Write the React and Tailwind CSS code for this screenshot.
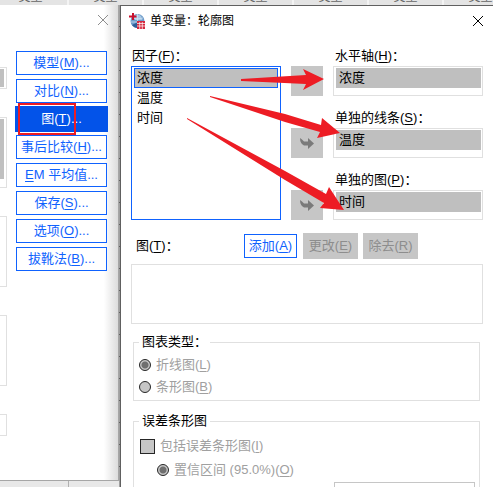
import { useState } from "react";

const sideButtons = [
  { text: "模型", hotkey: "M" },
  { text: "对比", hotkey: "N" },
  { text: "图", hotkey: "T" },
  { text: "事后比较", hotkey: "H" },
  { text: "EM 平均值" },
  { text: "保存", hotkey: "S" },
  { text: "选项", hotkey: "O" },
  { text: "拔靴法", hotkey: "B" },
];

const factors = ["浓度", "温度", "时间"];

const targets = [
  { id: "axis", label: "水平轴", hotkey: "H", value: "浓度" },
  { id: "lines", label: "单独的线条", hotkey: "S", value: "温度" },
  { id: "plots", label: "单独的图", hotkey: "P", value: "时间" },
];

const radioClass =
  "size-3 shrink-0 appearance-none rounded-full border border-[#262626] bg-[#c6c6c6] checked:bg-[radial-gradient(circle,#6f6f6f_0_3px,#c6c6c6_4px)]";

const Hotkey = ({ children }) => (
  <>
    (<u className="underline-offset-2">{children}</u>)
  </>
);

const CloseIcon = () => (
  <svg viewBox="0 0 10 10" className="size-[10px]" fill="none" stroke="currentColor">
    <path d="M0 0L10 10M10 0L0 10" />
  </svg>
);

const AppIcon = () => (
  <svg viewBox="0 0 16 16" className="size-4 shrink-0">
    <circle cx="8.5" cy="8" r="7" fill="#6d9bc9" />
    <path d="M3 12A7 7 0 0 0 9 15V9Z" fill="#2f5f98" />
    <path d="M5 3Q8.5 0.5 12 3L13.5 7H6Z" fill="#a9c8e4" />
    <path d="M2 9H14M8.5 1V15M3 5Q8 7 14 5" stroke="#d5e5f3" strokeWidth="0.7" fill="none" />
    <path d="M0 3.5H7.5M4 0V7" stroke="#c8102e" strokeWidth="2" />
    <rect x="8" y="8" width="8" height="8" fill="#d5283f" />
    <path d="M8 10.5H16M8 13H16M10.7 9V16M13.3 9V16" stroke="#fff" strokeWidth="0.7" />
  </svg>
);

const MoveIcon = () => (
  <svg viewBox="0 0 16 16" className="size-4" fill="#7a7a7a">
    <path d="M1 3L3 4.5L5 6.5H9V3L15 8.5L9 14V10.500H5Q1 8.500 1 3Z" />
  </svg>
);

const ParentDialog = () => (
  <aside className="flex h-[476px] w-[119px] shrink-0 flex-col border-r border-b border-[#a6a6a6] bg-linear-to-r from-white from-88% to-[#dcdcdc] text-[#0f62fe]">
    <div className="flex h-[30px] items-center justify-end pr-[10px] text-[#8d8d8d]">
      <button aria-label="关闭">
        <CloseIcon />
      </button>
    </div>
    <div className="flex pr-[10px]">
      {/* right edges of the option fields */}
      <div className="mt-8 flex w-[7px] shrink-0 flex-col gap-7">
        <div className="h-[22px] border border-l-0 border-[#e0e0e0] py-px pr-[2px]">
          <div className="h-full bg-[#c0c0c0]" />
        </div>
        <div className="h-[71px] border border-l-0 border-[#e0e0e0] pt-px pr-[2px] pb-2">
          <div className="h-full bg-[#c0c0c0]" />
        </div>
        <div className="h-[71px] border border-l-0 border-[#e0e0e0]" />
        <div className="h-[71px] border border-l-0 border-[#e0e0e0]" />
        <div className="h-[22px] border border-l-0 border-[#e0e0e0]" />
      </div>
      <nav className="mt-[15px] flex flex-1 flex-col gap-[2px] pl-2">
        {sideButtons.map((btn) =>
          btn.hotkey === "T" ? (
            <button key={btn.text} className="relative h-[26px] bg-[#0353e9] text-white">
              {btn.text}
              <Hotkey>{btn.hotkey}</Hotkey>...
              <span className="absolute -top-[3px] left-[3px] h-8 w-[58px] border-2 border-[#ed1c24]" />
            </button>
          ) : (
            <button
              key={btn.text}
              className="m-px h-6 border border-[#0f62fe] bg-white whitespace-nowrap"
            >
              {btn.hotkey ? (
                <>
                  {btn.text}
                  <Hotkey>{btn.hotkey}</Hotkey>...
                </>
              ) : (
                <>
                  <u className="underline-offset-2">E</u>M 平均值...
                </>
              )}
            </button>
          )
        )}
      </nav>
    </div>
  </aside>
);

export default function App() {
  const [factor, setFactor] = useState("浓度");

  return (
    <div className="flex h-screen flex-col overflow-hidden bg-[#e8e8e8] font-['Liberation_Sans','Noto_Sans_CJK_SC',sans-serif] text-[13px] leading-5 text-black">
      {/* data sheet header behind the dialogs */}
      <div className="-ml-[6px] flex h-[5px] shrink-0 items-end overflow-hidden bg-[#e4e4e4] text-[12px] leading-4 text-[#666]">
        {[0, 1, 2, 3, 4, 5, 6].map((n) => (
          <div key={n} className="w-[75px] shrink-0 border-r-2 border-[#f4f4f4] text-center">
            类型
          </div>
        ))}
      </div>

      <div className="flex min-h-0 flex-1">
        <div className="flex flex-col">
          <ParentDialog />
          <div className="h-2 w-[69px] border-r border-[#b0b0b0]" />
        </div>
        <div className="w-[2px] shrink-0 border-r border-[#606060] bg-[repeating-linear-gradient(#a0a0a0_0_21px,#606060_21px_22px)]" />

        <main className="relative min-w-0 flex-1 border-t border-[#606060] bg-white">
          <header className="flex h-[30px] items-center pr-[10px] pl-2 text-[12px]">
            <AppIcon />
            <h1 className="ml-[5px] flex-1">单变量：轮廓图</h1>
            <button aria-label="关闭">
              <CloseIcon />
            </button>
          </header>

          <div className="px-[10px] pt-[10px]">
            <div className="grid grid-cols-[1fr_32px_1fr] gap-x-[10px]">
              <div className="flex flex-col">
                <span id="factors" className="pl-px">
                  因子<Hotkey>F</Hotkey>：
                </span>
                <ul
                  role="listbox"
                  aria-labelledby="factors"
                  className="flex-1 border border-[#0f62fe] p-px"
                >
                  {factors.map((f) => (
                    <li
                      key={f}
                      role="option"
                      aria-selected={f === factor}
                      onClick={() => setFactor(f)}
                      className={
                        f === factor
                          ? "mx-px h-5 border border-[#0f62fe] bg-[#bfbfbf] px-[2px] leading-[18px]"
                          : "mx-px h-5 px-[3px]"
                      }
                    >
                      {f}
                    </li>
                  ))}
                </ul>
              </div>

              <div className="flex flex-col gap-8 pt-5">
                {targets.map((t) => (
                  <button
                    key={t.id}
                    disabled
                    aria-label={t.label}
                    className="flex h-[30px] items-center justify-center bg-[#c6c6c6]"
                  >
                    <MoveIcon />
                  </button>
                ))}
              </div>

              <div className="flex flex-col gap-3">
                {targets.map((t) => (
                  <div key={t.id}>
                    <label htmlFor={t.id} className="block pl-[2px]">
                      {t.label}
                      <Hotkey>{t.hotkey}</Hotkey>：
                    </label>
                    <div className="h-[30px] border border-[#e0e0e0] py-px pr-px pl-[2px]">
                      <input
                        id={t.id}
                        readOnly
                        value={t.value}
                        className="block h-5 w-full bg-[#bfbfbf] px-[3px] outline-none"
                      />
                    </div>
                  </div>
                ))}
              </div>
            </div>

            <div className="mt-[13px] flex items-center gap-[5px]">
              <span id="plot-list" className="w-[107px] pl-[5px]">
                图<Hotkey>T</Hotkey>：
              </span>
              <button className="m-px h-6 w-[53px] border border-[#0f62fe] text-[#0f62fe]">
                添加<Hotkey>A</Hotkey>
              </button>
              <button disabled className="h-[26px] w-[55px] bg-[#c6c6c6] text-[#8d8d8d]">
                更改<Hotkey>E</Hotkey>
              </button>
              <button disabled className="h-[26px] w-[55px] bg-[#c6c6c6] text-[#8d8d8d]">
                除去<Hotkey>R</Hotkey>
              </button>
            </div>
            <ul
              role="listbox"
              aria-labelledby="plot-list"
              className="mt-[5px] h-[60px] border border-[#e0e0e0]"
            />

            <fieldset className="mt-2 mr-[3px] ml-[2px] border border-[#e0e0e0] pt-[2px] pb-[2px] pl-[5px] text-[#a0a0a0]">
              <legend className="px-[3px] text-black">图表类型：</legend>
              <label className="flex h-[22px] items-center gap-[5px]">
                <input type="radio" name="chart" defaultChecked disabled className={radioClass} />
                <span>
                  折线图<Hotkey>L</Hotkey>
                </span>
              </label>
              <label className="flex h-[22px] items-center gap-[5px]">
                <input type="radio" name="chart" disabled className={radioClass} />
                <span>
                  条形图<Hotkey>B</Hotkey>
                </span>
              </label>
            </fieldset>

            <fieldset className="mt-[10px] mr-[3px] ml-[2px] border border-[#e0e0e0] pt-[3px] pr-1 pb-2 pl-[5px] text-[#a0a0a0]">
              <legend className="px-[3px] text-black">误差条形图</legend>
              <label className="flex h-6 items-center gap-[5px] pl-px">
                <input
                  type="checkbox"
                  disabled
                  className="size-[15px] shrink-0 appearance-none border border-[#262626] bg-[#c6c6c6]"
                />
                <span>
                  包括误差条形图<Hotkey>I</Hotkey>
                </span>
              </label>
              <label className="flex h-6 items-center gap-[5px] pl-[18px]">
                <input type="radio" name="error" defaultChecked disabled className={radioClass} />
                <span>
                  置信区间 (95.0%)<Hotkey>O</Hotkey>
                </span>
              </label>
              <input
                aria-label="置信区间"
                disabled
                className="ml-auto block h-6 w-[42%] border border-[#c6c6c6]"
              />
            </fieldset>
          </div>

          {/* arrows from each factor to its field */}
          <svg
            viewBox="121 6 372 220"
            className="pointer-events-none absolute top-0 left-0 h-[220px] w-[372px]"
            fill="#ed1c24"
          >
            <path d="M241 79L306 75L303 69L324 79L303 90L306 84L241 81Z" />
            <path d="M210 96L285 114L321 125L322 118L340 133L317 138L320 132L285 122L210 97Z" />
            <path d="M187 118L285 171L326 194L329 187L344 210L320 208L324 203L285 180L187 119Z" />
          </svg>
        </main>
      </div>
    </div>
  );
}
